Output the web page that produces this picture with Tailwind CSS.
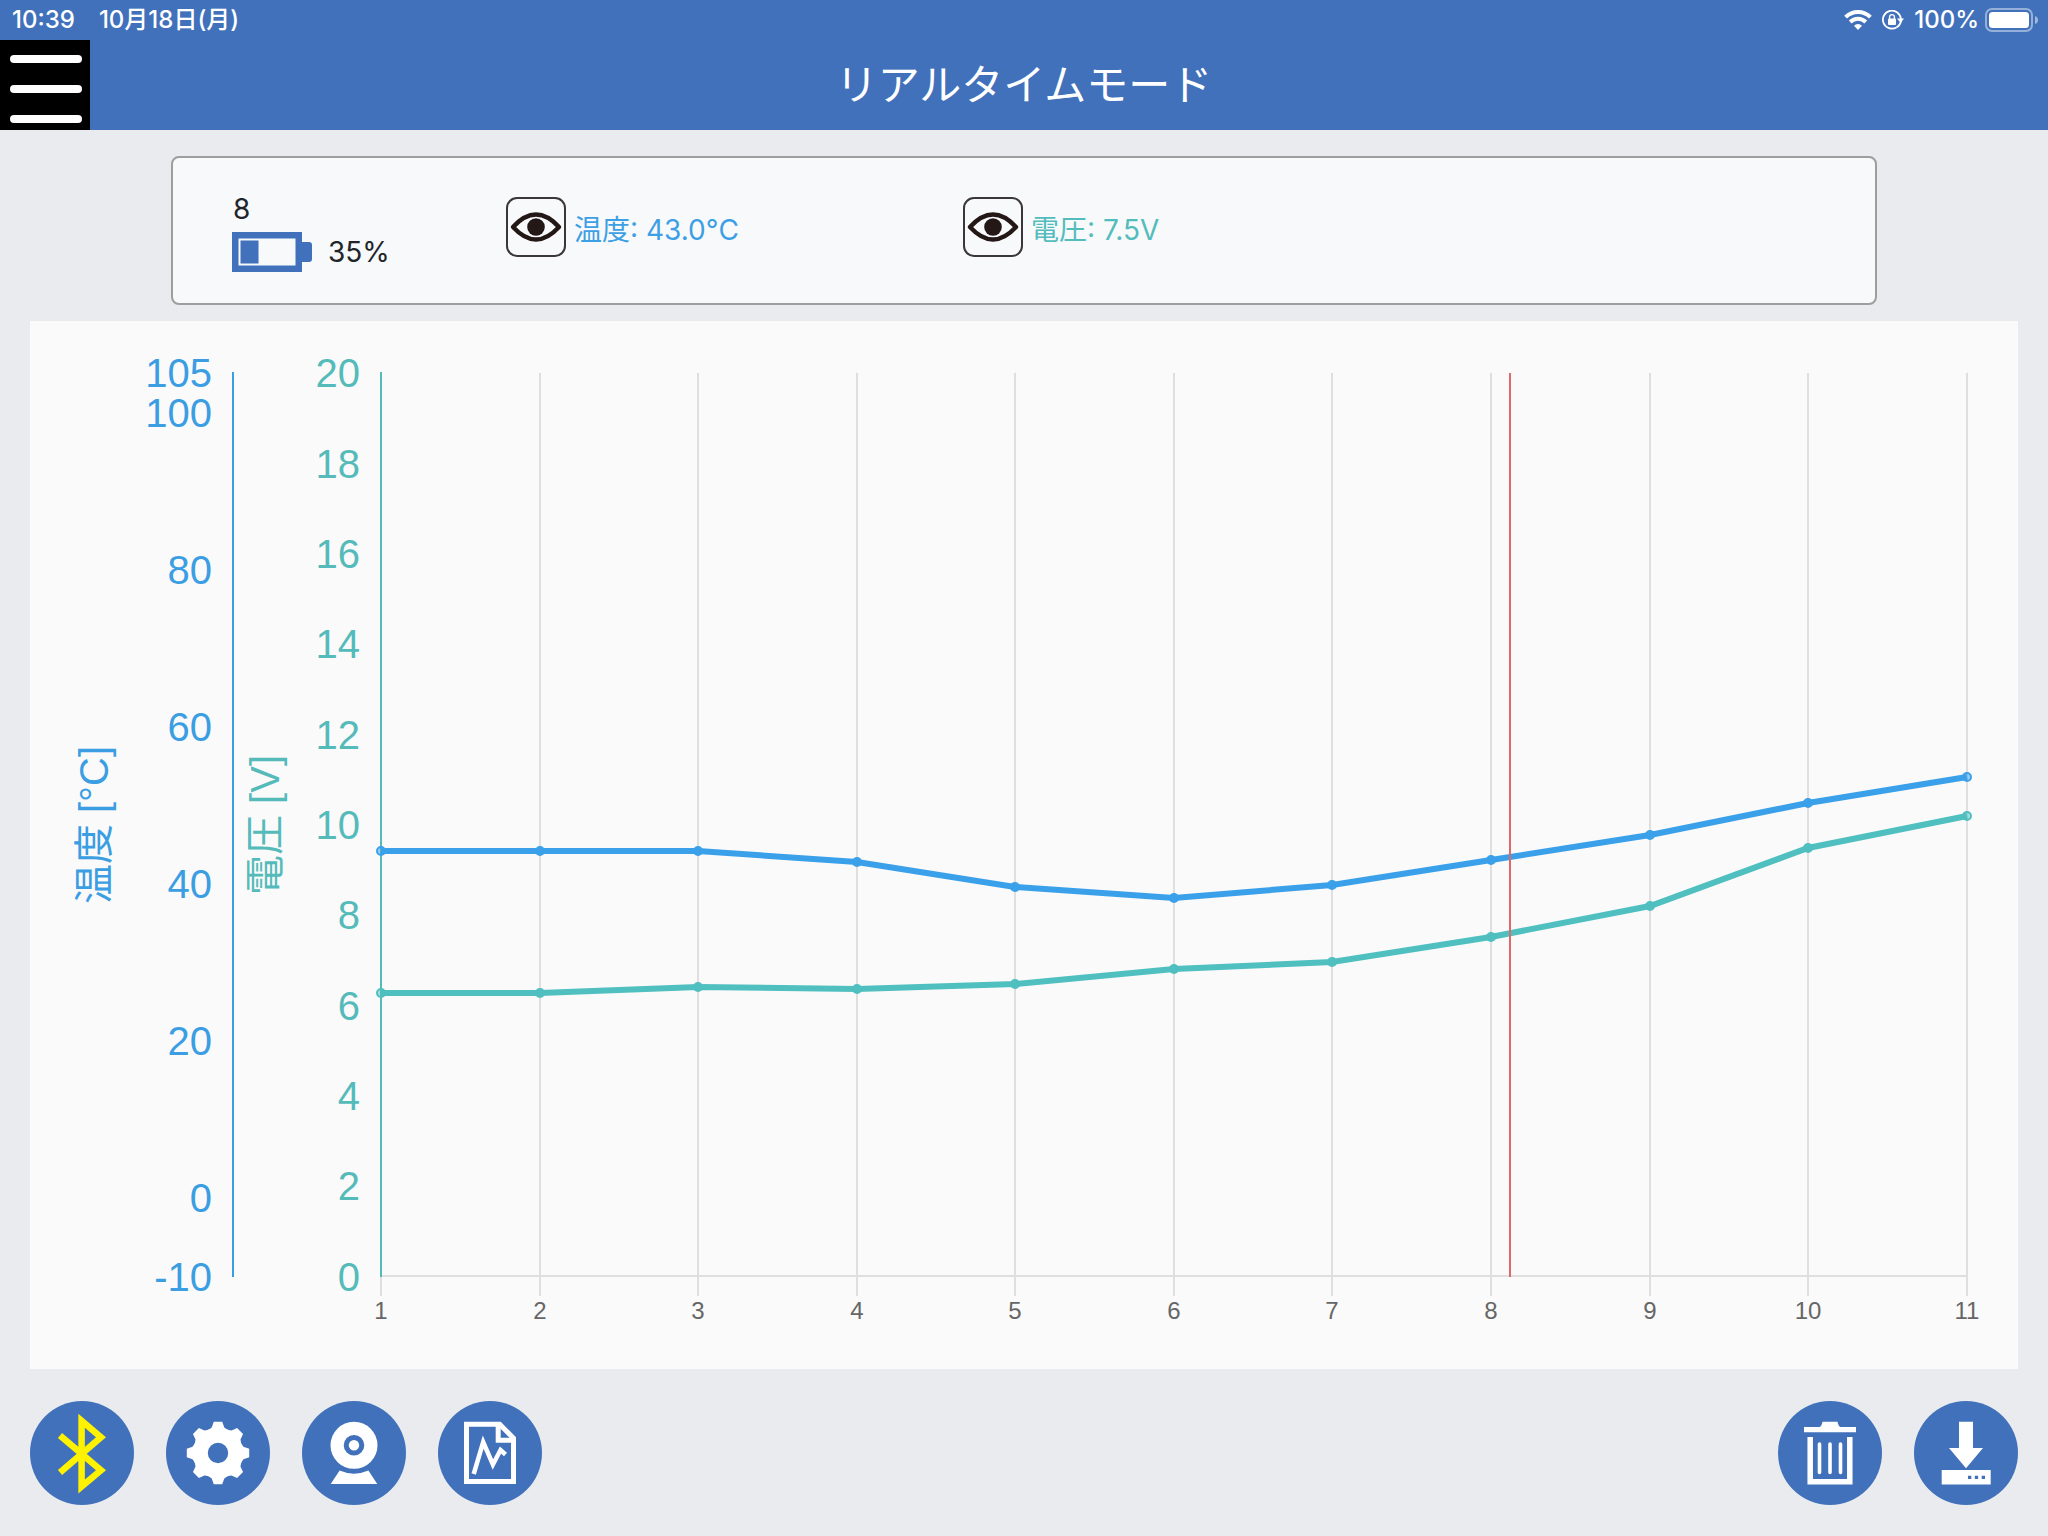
<!DOCTYPE html>
<html lang="ja">
<head>
<meta charset="utf-8">
<meta name="viewport" content="width=device-width, initial-scale=1">
<title>リアルタイムモード</title>
<script src="https://cdn.jsdelivr.net/npm/@tailwindcss/browser@4"></script>
</head>
<body class="flex min-h-screen flex-col bg-[#e9ebee] font-[Inter,'Noto_Sans_CJK_JP',sans-serif] text-[#212529]">

<header class="bg-[#4171bb] text-white">
  <!-- Status bar -->
  <div class="flex h-10 items-center justify-between pr-[9px] pl-3 text-2xl leading-10 font-medium">
    <div class="flex gap-6">
      <span>10:39</span>
      <span>10月18日(月)</span>
    </div>
    <div class="flex items-center">
      <svg class="mr-2.5 h-5 w-7" viewBox="0 0 28 20" fill="none" stroke="#fff" stroke-width="4" aria-hidden="true">
        <path d="M1.6 7.2a17.5 17.5 0 0 1 24.8 0"/>
        <path d="M6.2 12a11 11 0 0 1 15.6 0"/>
        <path d="M14 20l-4-4.2a5.6 5.6 0 0 1 8 0z" fill="#fff" stroke="none"/>
      </svg>
      <svg class="mr-2.5 h-5 w-[22px]" viewBox="0 0 22 20" aria-hidden="true">
        <path d="M14.5 17.400A9 9 0 1 1 18.900 9" fill="none" stroke="#fff" stroke-width="1.800"/>
        <path d="M19 11a9 9 0 0 1-4.500 6.400" fill="none" stroke="#fff" stroke-width="1.800"/>
        <path d="M15 8.600h7L18.700 13z" fill="#fff"/>
        <rect x="6" y="8.600" width="8" height="6.400" rx="1" fill="#fff"/>
        <path d="M7.600 9V7a2.400 2.400 0 0 1 4.800 0v2" fill="none" stroke="#fff" stroke-width="1.400"/>
      </svg>
      <span class="mr-1.5">100%</span>
      <svg class="h-6 w-[54px]" viewBox="0 0 54 24" aria-hidden="true">
        <rect x="1" y="1" width="46" height="22" rx="6" fill="none" stroke="#fff" stroke-opacity=".45" stroke-width="2"/>
        <rect x="4" y="4" width="40" height="16" rx="3.5" fill="#fff"/>
        <path d="M50 8q3 1 3 4t-3 4z" fill="#fff" fill-opacity=".5"/>
      </svg>
    </div>
  </div>
  <!-- Title bar -->
  <div class="grid h-[90px] grid-cols-[90px_1fr_90px] items-center">
    <button type="button" aria-label="メニュー" class="flex h-[90px] flex-col gap-[22px] bg-black pt-[15px] pl-2.5">
      <span class="h-2 w-[72px] rounded-full bg-white"></span>
      <span class="h-2 w-[72px] rounded-full bg-white"></span>
      <span class="h-2 w-[72px] rounded-full bg-white"></span>
    </button>
    <h1 class="text-center text-[42px] leading-[88px]">リアルタイムモード</h1>
  </div>
</header>

<main class="flex flex-1 flex-col px-[30px] pt-[26px]">
  <!-- Sensor summary -->
  <section class="mx-auto grid h-[149px] w-[1706px] max-w-full grid-cols-[274fr_457fr_853fr] rounded-lg border-2 border-[#9e9e9f] bg-[#f8f9fb] px-[59px] text-[28px] leading-[42px]">
    <div class="pt-[30px]">
      <p class="pb-0.5 pl-px">8</p>
      <div class="flex items-center gap-4 leading-[38px]">
        <svg class="h-10 w-20" viewBox="0 0 80 40" aria-hidden="true">
          <path d="M70 10h7q3 0 3 3v14q0 3-3 3h-7z" fill="#4171bb"/>
          <rect width="70" height="40" fill="#4171bb"/>
          <rect x="6.500" y="6.500" width="57" height="27" fill="#f8f9fb"/>
          <rect x="8.500" y="8.500" width="18" height="23" fill="#4171bb"/>
        </svg>
        <span>35%</span>
      </div>
    </div>
    <div class="flex items-start gap-2 pt-[39px]">
      <button type="button" aria-label="温度の表示切替" class="size-[60px] rounded-[11px] border-2 border-[#3b3637]">
        <svg class="size-14" viewBox="0 0 56 56" aria-hidden="true">
          <path d="M5 28Q28 3 51 28Q28 53 5 28z" fill="none" stroke="#231816" stroke-width="4.400" stroke-linejoin="round"/>
          <circle cx="28" cy="28" r="8.800" fill="#231816"/>
        </svg>
      </button>
      <span class="leading-[66px] text-[#3d9fe4]">温度: 43.0°C</span>
    </div>
    <div class="flex items-start gap-2 pt-[39px]">
      <button type="button" aria-label="電圧の表示切替" class="size-[60px] rounded-[11px] border-2 border-[#3b3637]">
        <svg class="size-14" viewBox="0 0 56 56" aria-hidden="true">
          <path d="M5 28Q28 3 51 28Q28 53 5 28z" fill="none" stroke="#231816" stroke-width="4.400" stroke-linejoin="round"/>
          <circle cx="28" cy="28" r="8.800" fill="#231816"/>
        </svg>
      </button>
      <span class="leading-[66px] text-[#53bcbc]">電圧: 7.5V</span>
    </div>
  </section>

  <!-- Chart -->
  <section class="mt-4 bg-[#fafafa]">
    <svg class="block h-auto w-full font-['Liberation_Sans','Noto_Sans_CJK_JP',sans-serif]" viewBox="0 0 1988 1048" role="img" aria-label="温度と電圧のグラフ">
      <path d="M351 52V975M510 52V975M668 52V975M827 52V975M985 52V975M1144 52V975M1302 52V975M1461 52V975M1620 52V975M1778 52V975M1937 52V975M351 955H1938" stroke="#dfdfdf" stroke-width="2"/>
      <path d="M203 51V956" stroke="#3c9ee2" stroke-width="2"/>
      <path d="M351 51V956" stroke="#55bbba" stroke-width="2"/>

      <g class="text-[40px]" fill="#3c9ee2" text-anchor="end">
        <text x="182" y="66">105</text>
        <text x="182" y="106">100</text>
        <text x="182" y="263">80</text>
        <text x="182" y="420">60</text>
        <text x="182" y="577">40</text>
        <text x="182" y="734">20</text>
        <text x="182" y="891">0</text>
        <text x="182" y="970">-10</text>
      </g>
      <g class="text-[40px]" fill="#55bbba" text-anchor="end">
        <text x="330" y="66">20</text>
        <text x="330" y="157">18</text>
        <text x="330" y="247">16</text>
        <text x="330" y="337">14</text>
        <text x="330" y="428">12</text>
        <text x="330" y="518">10</text>
        <text x="330" y="608">8</text>
        <text x="330" y="699">6</text>
        <text x="330" y="789">4</text>
        <text x="330" y="879">2</text>
        <text x="330" y="970">0</text>
      </g>
      <g class="text-[40px]" text-anchor="middle">
        <text transform="translate(78 504) rotate(-90)" fill="#3c9ee2">温度 [°C]</text>
        <text transform="translate(249 504) rotate(-90)" fill="#55bbba">電圧 [V]</text>
      </g>
      <g class="text-2xl" fill="#666" text-anchor="middle">
        <text x="351" y="998">1</text>
        <text x="510" y="998">2</text>
        <text x="668" y="998">3</text>
        <text x="827" y="998">4</text>
        <text x="985" y="998">5</text>
        <text x="1144" y="998">6</text>
        <text x="1302" y="998">7</text>
        <text x="1461" y="998">8</text>
        <text x="1620" y="998">9</text>
        <text x="1778" y="998">10</text>
        <text x="1937" y="998">11</text>
      </g>

      <g stroke="#4fbfc0" fill="#4fbfc0" fill-opacity=".5">
        <path d="M351 672L510 672L668 666L827 668L985 663L1144 648L1302 641L1461 616L1620 585L1778 527L1937 495" fill="none" stroke-width="6"/>
        <g stroke-width="2">
          <circle cx="351" cy="672" r="4"/><circle cx="510" cy="672" r="4"/><circle cx="668" cy="666" r="4"/><circle cx="827" cy="668" r="4"/><circle cx="985" cy="663" r="4"/><circle cx="1144" cy="648" r="4"/><circle cx="1302" cy="641" r="4"/><circle cx="1461" cy="616" r="4"/><circle cx="1620" cy="585" r="4"/><circle cx="1778" cy="527" r="4"/><circle cx="1937" cy="495" r="4"/>
        </g>
      </g>
      <g stroke="#3aa0ea" fill="#3aa0ea" fill-opacity=".5">
        <path d="M351 530L510 530L668 530L827 541L985 566L1144 577L1302 564L1461 539L1620 514L1778 482L1937 456" fill="none" stroke-width="6"/>
        <g stroke-width="2">
          <circle cx="351" cy="530" r="4"/><circle cx="510" cy="530" r="4"/><circle cx="668" cy="530" r="4"/><circle cx="827" cy="541" r="4"/><circle cx="985" cy="566" r="4"/><circle cx="1144" cy="577" r="4"/><circle cx="1302" cy="564" r="4"/><circle cx="1461" cy="539" r="4"/><circle cx="1620" cy="514" r="4"/><circle cx="1778" cy="482" r="4"/><circle cx="1937" cy="456" r="4"/>
        </g>
      </g>
      <path d="M1480 52V956" stroke="#dc6a68" stroke-width="2"/>
    </svg>
  </section>

  <!-- Toolbar -->
  <nav class="flex justify-between pt-8 pb-[31px]">
    <div class="flex gap-8">
      <button type="button" aria-label="Bluetooth" class="size-[104px] rounded-full bg-[#4171bb]">
        <svg class="size-full" viewBox="0 0 104 104" aria-hidden="true">
          <path d="M30 34.500L71 69.300L51.600 85.600V19.700L71 36.300L30 71.500" fill="none" stroke="#fff200" stroke-width="6.500" stroke-miterlimit="10"/>
        </svg>
      </button>
      <button type="button" aria-label="設定" class="size-[104px] rounded-full bg-[#4171bb]">
        <svg class="size-full" viewBox="0 0 104 104" aria-hidden="true">
          <g transform="translate(52 52)">
            <circle r="17.700" fill="none" stroke="#fff" stroke-width="15"/>
            <g fill="#fff">
              <path id="tooth" d="M-4.200-31.200H4.200L6.300-25.500L11-22L0-18L-11-22L-6.300-25.500z"/>
              <use href="#tooth" transform="rotate(45)"/>
              <use href="#tooth" transform="rotate(90)"/>
              <use href="#tooth" transform="rotate(135)"/>
              <use href="#tooth" transform="rotate(180)"/>
              <use href="#tooth" transform="rotate(225)"/>
              <use href="#tooth" transform="rotate(270)"/>
              <use href="#tooth" transform="rotate(315)"/>
            </g>
          </g>
        </svg>
      </button>
      <button type="button" aria-label="カメラ" class="size-[104px] rounded-full bg-[#4171bb]">
        <svg class="size-full" viewBox="0 0 104 104" fill="#fff" aria-hidden="true">
          <circle cx="52" cy="44.300" r="16.900" fill="none" stroke="#fff" stroke-width="13.200"/>
          <circle cx="52" cy="44.300" r="5.200"/>
          <path d="M37.600 69.500Q52 75.800 66.400 69.500L75.300 83H28.700z"/>
        </svg>
      </button>
      <button type="button" aria-label="レポート" class="size-[104px] rounded-full bg-[#4171bb]">
        <svg class="size-full" viewBox="0 0 104 104" fill="none" stroke="#fff" stroke-width="5" aria-hidden="true">
          <path d="M61.700 23.200H28.500V80.500H75.500V37.300z"/>
          <path d="M60.200 23V39.200H76"/>
          <path d="M35.700 73L45.200 41L54.900 63.500L62.500 49L67.500 53.500" stroke-width="4.500"/>
        </svg>
      </button>
    </div>
    <div class="flex gap-8">
      <button type="button" aria-label="削除" class="size-[104px] rounded-full bg-[#4171bb]">
        <svg class="size-full" viewBox="0 0 104 104" aria-hidden="true">
          <path d="M26 26H41.500Q43.500 25.500 44.500 20.700H59.500Q60.500 25.500 62.500 26H78V31.300H26z" fill="#fff"/>
          <path d="M32.200 36V80.700H71.800V36" fill="none" stroke="#fff" stroke-width="5.500"/>
          <path d="M41.500 43V71.500M52 43V71.500M62.500 43V71.500" stroke="#fff" stroke-width="3.600" stroke-linecap="round"/>
        </svg>
      </button>
      <button type="button" aria-label="ダウンロード" class="size-[104px] rounded-full bg-[#4171bb]">
        <svg class="size-full" viewBox="0 0 104 104" aria-hidden="true">
          <path d="M45 20.700H59V47H69L52 67.300L35 47H45zM27.700 69H76.700V83.500H27.700z" fill="#fff"/>
          <path d="M54 76.300h3.300M60.800 76.300h3.300M67.700 76.300h3.300" stroke="#4171bb" stroke-width="3.300"/>
        </svg>
      </button>
    </div>
  </nav>
</main>
</body>
</html>
